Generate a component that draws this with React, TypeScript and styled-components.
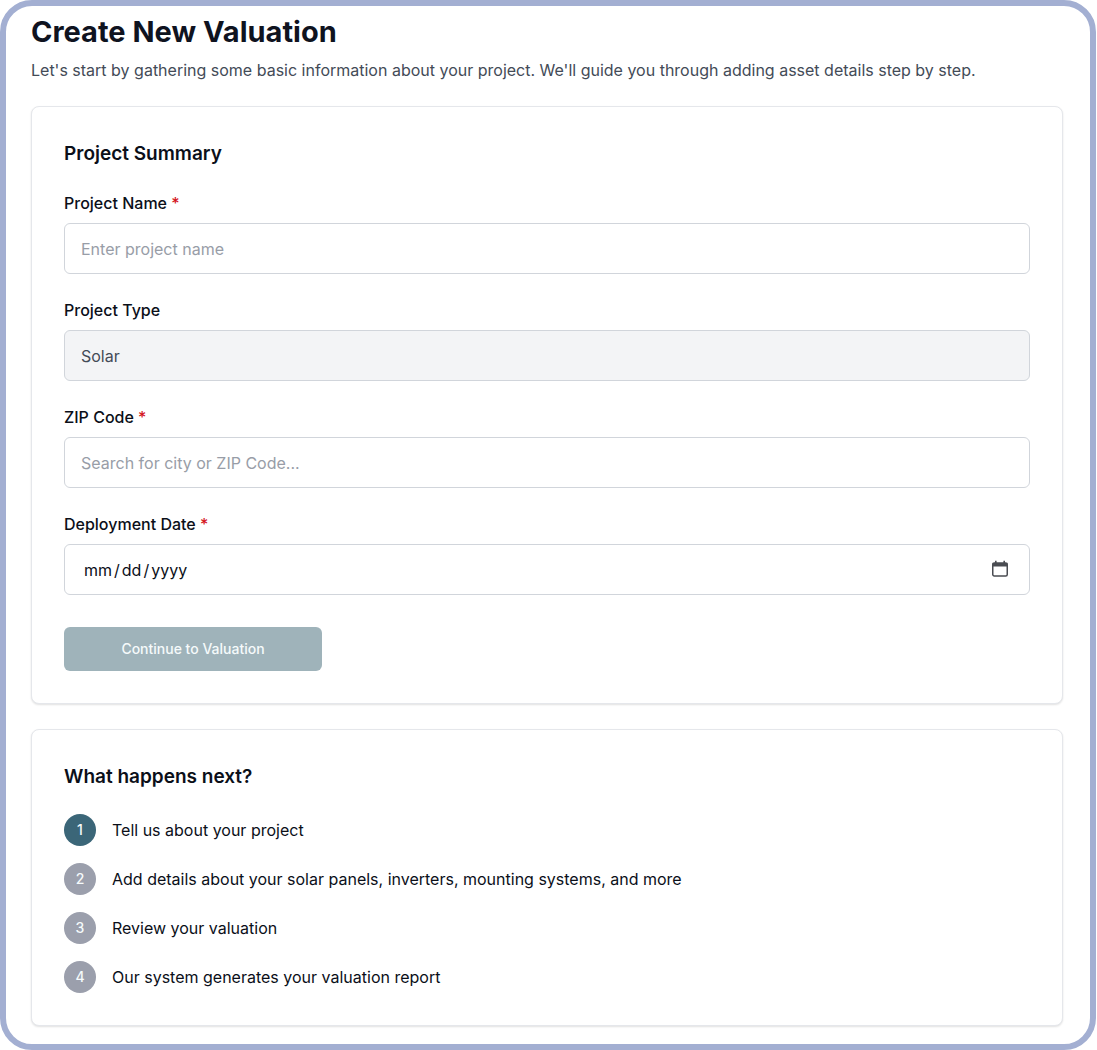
import React from "react";
import styled, { createGlobalStyle } from "styled-components";

const GlobalStyle = createGlobalStyle`
  *, *::before, *::after { box-sizing: border-box; }
  body {
    margin: 0;
    background: #ffffff;
    color: #0b0f19;
    font-family: Inter, "Liberation Sans", sans-serif;
    font-size: 16px;
    line-height: 24px;
  }
  h1, h2, p, ol { margin: 0; padding: 0; }
`;

const Frame = styled.main`
  min-height: 100vh;
  margin-right: 1px;
  padding: 8px 27px 16px 25px;
  border: 6px solid #a3afd2;
  border-radius: 32px;
`;

const PageHeader = styled.header`
  margin-bottom: 24px;
`;

const Title = styled.h1`
  margin-bottom: 8px;
  font-size: 29px;
  line-height: 36px;
  font-weight: 700;
  color: #0f131f;
`;

const Subtitle = styled.p`
  color: #434b57;
`;

const Stack = styled.div`
  display: flex;
  flex-direction: column;
  gap: 25px;
`;

const Card = styled.section`
  padding: 32px;
  border: 1px solid #e5e7eb;
  border-radius: 8px;
  background: #ffffff;
  box-shadow: 0 1px 2px rgba(0, 0, 0, 0.12);
`;

const CardTitle = styled.h2`
  margin-bottom: 22px;
  font-size: 19px;
  line-height: 30px;
  font-weight: 600;
`;

const Form = styled.form`
  display: flex;
  flex-direction: column;
  gap: 24px;
`;

const Field = styled.div`
  display: flex;
  flex-direction: column;
  gap: 8px;
`;

const Label = styled.label`
  font-weight: 500;
`;

const Required = styled.span`
  color: #d4141c;
`;

const Control = styled.div`
  position: relative;
  display: flex;
`;

const Input = styled.input`
  width: 100%;
  height: 51px;
  padding: 0 16px;
  border: 1px solid #d1d5db;
  border-radius: 6px;
  background: #ffffff;
  color: #0b0f19;
  font: inherit;

  &::placeholder { color: #989da7; opacity: 1; }
  &:read-only:not([type="date"]) { background: #f3f4f6; color: #434b57; }
  &:focus-visible { outline: 2px solid #3b6678; }
  &::-webkit-datetime-edit { padding-left: 2px; }
  &::-webkit-datetime-edit-text { padding: 0 1px; }
  &::-webkit-calendar-picker-indicator { opacity: 0; }
`;

const CalendarIcon = styled.svg`
  position: absolute;
  top: 16px;
  right: 21px;
  width: 18px;
  height: 18px;
  pointer-events: none;
`;

const SubmitButton = styled.button`
  align-self: flex-start;
  width: 258px;
  height: 44px;
  margin-top: 8px;
  border: 0;
  border-radius: 6px;
  background: #9fb3ba;
  color: #f5fafb;
  font: inherit;
  font-size: 14px;
  font-weight: 500;
`;

const Steps = styled.ol`
  display: flex;
  flex-direction: column;
  gap: 17px;
  list-style: none;
`;

const Step = styled.li`
  display: flex;
  align-items: center;
  gap: 16px;
`;

const StepNumber = styled.span<{ $active: boolean }>`
  display: grid;
  place-items: center;
  flex: none;
  width: 32px;
  height: 32px;
  border-radius: 50%;
  background: ${({ $active }) => ($active ? "#3b6678" : "#9b9fac")};
  color: #f5fafb;
  font-size: 14px;
  font-weight: 500;
`;

type FormFieldProps = React.InputHTMLAttributes<HTMLInputElement> & {
  id: string;
  label: string;
};

function FormField({ label, ...inputProps }: FormFieldProps) {
  return (
    <Field>
      <Label htmlFor={inputProps.id}>
        {label}
        {inputProps.required && <Required> *</Required>}
      </Label>
      <Control>
        <Input {...inputProps} />
        {inputProps.type === "date" && (
          <CalendarIcon viewBox="0 0 18 18" aria-hidden="true">
            <rect x="1.75" y="3" width="14.5" height="13" rx="1.5" fill="none" stroke="#4a4c52" strokeWidth="1.5" />
            <path d="M1.5 3h15v3.5h-15zM4 .8h1.6V3H4zM12.4 .8H14V3h-1.6z" fill="#4a4c52" />
          </CalendarIcon>
        )}
      </Control>
    </Field>
  );
}

const steps = [
  "Tell us about your project",
  "Add details about your solar panels, inverters, mounting systems, and more",
  "Review your valuation",
  "Our system generates your valuation report",
];

export default function App() {
  return (
    <>
      <GlobalStyle />
      <Frame>
        <PageHeader>
          <Title>Create New Valuation</Title>
          <Subtitle>
            Let's start by gathering some basic information about your project. We'll guide you
            through adding asset details step by step.
          </Subtitle>
        </PageHeader>
        <Stack>
          <Card>
            <CardTitle>Project Summary</CardTitle>
            <Form>
              <FormField id="name" label="Project Name" type="text" placeholder="Enter project name" required />
              <FormField id="type" label="Project Type" type="text" defaultValue="Solar" readOnly />
              <FormField id="zip" label="ZIP Code" type="text" placeholder="Search for city or ZIP Code..." required />
              <FormField id="date" label="Deployment Date" type="date" required />
              <SubmitButton type="submit" disabled>
                Continue to Valuation
              </SubmitButton>
            </Form>
          </Card>
          <Card>
            <CardTitle>What happens next?</CardTitle>
            <Steps>
              {steps.map((text, index) => (
                <Step key={text}>
                  <StepNumber $active={index === 0}>{index + 1}</StepNumber>
                  <span>{text}</span>
                </Step>
              ))}
            </Steps>
          </Card>
        </Stack>
      </Frame>
    </>
  );
}
